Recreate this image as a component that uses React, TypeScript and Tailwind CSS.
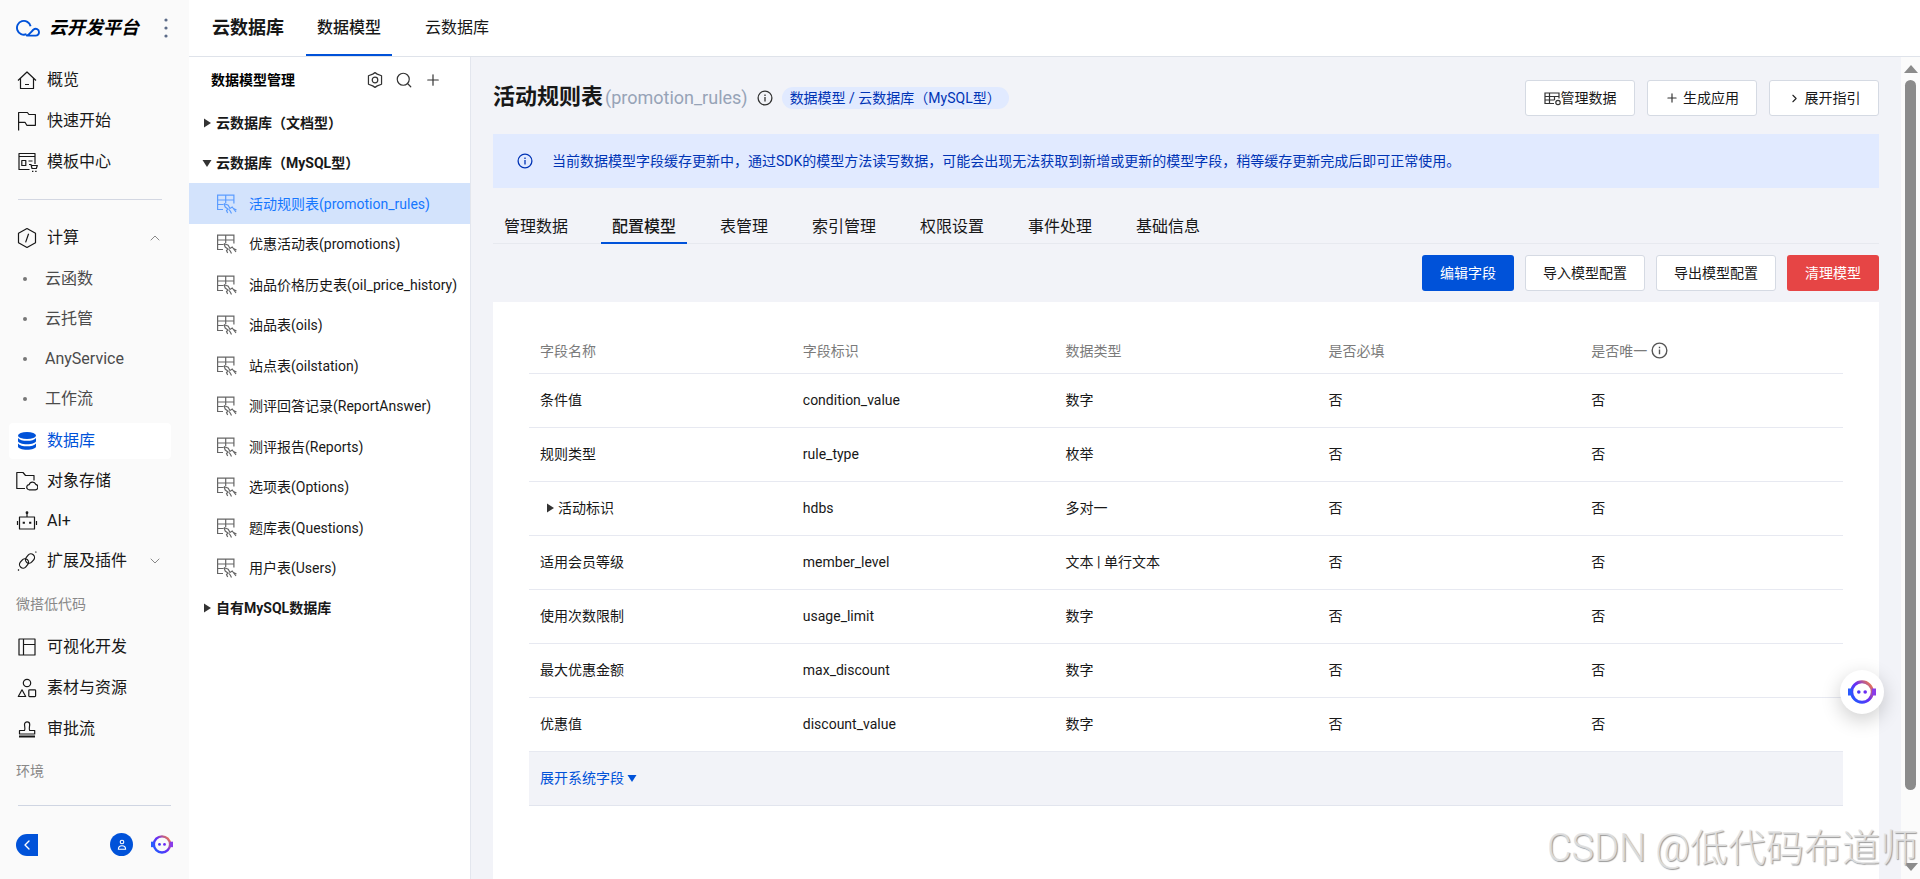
import React, { useState } from "react";
import { ChevronDown, ChevronLeft, ChevronRight, ChevronUp, Plus, Search } from "lucide-react";

interface IconProps {
  className?: string;
}

interface NavItem {
  label: string;
  icon: (props: IconProps) => React.ReactElement;
  children?: string[];
  collapsed?: boolean;
}

interface Field {
  name: string;
  key: string;
  type: string;
  expandable?: boolean;
}

const quickNav: NavItem[] = [
  { label: "概览", icon: HomeIcon },
  { label: "快速开始", icon: FlagIcon },
  { label: "模板中心", icon: TemplateIcon },
];

const mainNav: NavItem[] = [
  {
    label: "计算",
    icon: ComputeIcon,
    children: ["云函数", "云托管", "AnyService", "工作流"],
  },
  { label: "数据库", icon: DatabaseIcon },
  { label: "对象存储", icon: StorageIcon },
  { label: "AI+", icon: RobotIcon },
  { label: "扩展及插件", icon: PluginIcon, collapsed: true },
];

const lowCodeNav: NavItem[] = [
  { label: "可视化开发", icon: LayoutIcon },
  { label: "素材与资源", icon: ShapesIcon },
  { label: "审批流", icon: StampIcon },
];

const models = [
  "活动规则表(promotion_rules)",
  "优惠活动表(promotions)",
  "油品价格历史表(oil_price_history)",
  "油品表(oils)",
  "站点表(oilstation)",
  "测评回答记录(ReportAnswer)",
  "测评报告(Reports)",
  "选项表(Options)",
  "题库表(Questions)",
  "用户表(Users)",
];

const tabs = ["管理数据", "配置模型", "表管理", "索引管理", "权限设置", "事件处理", "基础信息"];

const fields: Field[] = [
  { name: "条件值", key: "condition_value", type: "数字" },
  { name: "规则类型", key: "rule_type", type: "枚举" },
  { name: "活动标识", key: "hdbs", type: "多对一", expandable: true },
  { name: "适用会员等级", key: "member_level", type: "文本 | 单行文本" },
  { name: "使用次数限制", key: "usage_limit", type: "数字" },
  { name: "最大优惠金额", key: "max_discount", type: "数字" },
  { name: "优惠值", key: "discount_value", type: "数字" },
];

export default function App() {
  return (
    <div className="relative flex h-screen overflow-hidden bg-white font-['Roboto','Noto_Sans_CJK_SC',sans-serif] text-sm text-[#181818]">
      <Sidebar />
      <div className="flex min-w-0 flex-1 flex-col">
        <TopBar />
        <div className="flex min-h-0 flex-1">
          <ModelTree />
          <Content />
          <Scrollbar />
        </div>
      </div>
      <button
        aria-label="智能助手"
        className="absolute right-9 bottom-[165px] flex size-11 items-center justify-center rounded-full bg-white shadow-[0_6px_20px_rgba(0,0,0,0.2)]"
      >
        <AssistantIcon className="w-7" />
      </button>
      <p className="pointer-events-none absolute right-0.5 bottom-[3px] text-[38px] leading-[56px] font-light whitespace-nowrap text-[#e2e2e2]/90 [text-shadow:1px_1px_1px_#9a9a9a]">
        CSDN @低代码布道师
      </p>
    </div>
  );
}

function Sidebar() {
  return (
    <aside className="flex w-[189px] shrink-0 flex-col bg-[#fafafa]">
      <div className="flex h-14 items-center pl-4">
        <LogoIcon className="w-6" />
        <span className="ml-[9px] text-lg font-bold text-black italic">云开发平台</span>
        <button aria-label="更多" className="ml-[25px] text-[#5b6b88]">
          <svg viewBox="0 0 4 20" className="h-5 w-1" fill="currentColor">
            <circle cx="2" cy="2" r="1.6" />
            <circle cx="2" cy="10" r="1.6" />
            <circle cx="2" cy="18" r="1.6" />
          </svg>
        </button>
      </div>
      <nav className="pt-1.5">
        <NavList items={quickNav} className="gap-[5px]" />
        <hr className="mt-[19px] mr-[27px] mb-5 ml-[18px] border-[#d3d7e2]" />
        <NavList items={mainNav} className="gap-1" />
        <h2 className="flex h-[50px] items-center pl-4 text-[#888]">微搭低代码</h2>
        <NavList items={lowCodeNav} className="gap-[5px]" />
        <h2 className="flex h-12 items-center pl-4 text-[#888]">环境</h2>
      </nav>
      <hr className="mt-[10px] mr-[18px] ml-[18px] border-[#cfd5e2]" />
      <div className="mt-[27px] flex items-center pl-4">
        <button
          aria-label="收起"
          className="flex size-[22px] items-center justify-center rounded-l-full bg-[#0052d9] text-white"
        >
          <ChevronLeft size={16} />
        </button>
        <button
          aria-label="账号"
          className="ml-[72px] flex size-[23px] items-center justify-center rounded-full bg-[#0052d9] text-white"
        >
          <svg viewBox="0 0 12 12" className="size-3" fill="none" stroke="currentColor" strokeWidth="1.1">
            <circle cx="6" cy="3" r="1.8" />
            <path d="M2.4 10.3c0-3 1.6-3.6 3.6-3.6s3.600.6 3.600 3.600z" />
          </svg>
        </button>
        <button aria-label="智能助手" className="ml-[18px]">
          <AssistantIcon className="w-[22px]" />
        </button>
      </div>
    </aside>
  );
}

function NavList({ items, className }: { items: NavItem[]; className: string }) {
  return (
    <ul className={`flex flex-col ${className}`}>
      {items.map((item) => (
        <NavRow key={item.label} item={item} />
      ))}
    </ul>
  );
}

function NavRow({ item }: { item: NavItem }) {
  const [open, setOpen] = useState(!item.collapsed);
  const active = item.label === "数据库";
  const foldable = item.children || item.collapsed;
  const Icon = item.icon;

  return (
    <li>
      <div
        className={`mr-[18px] ml-[9px] flex h-9 items-center rounded-sm pl-[7px] ${
          active ? "bg-white text-[#0052d9]" : ""
        }`}
      >
        <a href="#" className="flex items-center gap-[9px] text-base">
          <Icon className="size-[22px]" />
          {item.label}
        </a>
        {foldable && (
          <button
            aria-label={open ? "收起" : "展开"}
            onClick={() => setOpen(!open)}
            className="mr-2 ml-auto text-[#888]"
          >
            {open ? <ChevronUp size={16} strokeWidth={1.5} /> : <ChevronDown size={16} strokeWidth={1.5} />}
          </button>
        )}
      </div>
      {item.children && open && (
        <ul className="mt-[5px] mb-0.5 flex flex-col gap-1">
          {item.children.map((child) => (
            <li key={child} className="flex h-9 items-center pl-[23px] text-base text-[#4b4b4b]">
              <span className="mr-[18px] size-1 rounded-full bg-[#777]" />
              <a href="#">{child}</a>
            </li>
          ))}
        </ul>
      )}
    </li>
  );
}

function TopBar() {
  return (
    <header className="flex h-[57px] shrink-0 items-stretch gap-[22px] border-b border-[#dfe3ea] pl-[23px]">
      <h1 className="flex items-center text-lg font-bold">云数据库</h1>
      <nav className="flex gap-[22px] text-base">
        <a href="#" className="flex items-center border-b-2 border-[#0052d9] px-[11px] pt-0.5 font-medium">
          数据模型
        </a>
        <a href="#" className="flex items-center border-b-2 border-transparent px-[11px] pt-0.5">
          云数据库
        </a>
      </nav>
    </header>
  );
}

function ModelTree() {
  return (
    <section className="w-[282px] shrink-0 border-r border-[#e3e6ee]">
      <div className="flex h-[46px] items-center pl-[22px] text-[#333]">
        <h2 className="mr-auto font-bold text-black">数据模型管理</h2>
        <button aria-label="设置">
          <SettingIcon className="size-[18px]" />
        </button>
        <button aria-label="搜索" className="ml-[11px]">
          <Search size={18} strokeWidth={1.6} />
        </button>
        <button aria-label="新建" className="mr-7 ml-[11px]">
          <Plus size={18} strokeWidth={1.6} />
        </button>
      </div>
      <TreeGroup label="云数据库（文档型）" />
      <TreeGroup label="云数据库（MySQL型）" open />
      <ul>
        {models.map((model, i) => (
          <li key={model} className="odd:h-[41px] even:h-10">
            <a
              href="#"
              className={`flex h-full items-center pl-7 ${i === 0 ? "bg-[#d3e3fc] text-[#1677ff]" : ""}`}
            >
              <ModelIcon className={`mr-3 size-5 ${i === 0 ? "text-[#5c9dff]" : "text-[#666]"}`} />
              {model}
            </a>
          </li>
        ))}
      </ul>
      <TreeGroup label="自有MySQL数据库" />
    </section>
  );
}

function TreeGroup({ label, open }: { label: string; open?: boolean }) {
  return (
    <button className="flex h-10 w-full items-center gap-1 pl-[13px] font-bold">
      <CaretIcon className={`size-[10px] text-[#333] ${open ? "rotate-90" : ""}`} />
      {label}
    </button>
  );
}

function Content() {
  const [tab, setTab] = useState("配置模型");

  return (
    <main className="flex min-w-0 flex-1 flex-col bg-[#f2f3f8] px-[22px] pt-[23px]">
      <div className="flex h-9 items-center">
        <h2 className="pb-0.5 text-[22px] font-bold">活动规则表</h2>
        <span className="ml-0.5 text-lg text-[#97a3b7]">(promotion_rules)</span>
        <InfoIcon className="ml-[9px] size-4 text-[#333]" />
        <span className="ml-[9px] flex h-[22px] items-center rounded-full bg-[#e1eaff] px-2 text-[#0034b5]">
          数据模型 / 云数据库（MySQL型）
        </span>
        <div className="ml-auto flex gap-3">
          <Button className="w-[110px] border border-[#d5dae3] bg-white">
            <DataIcon className="size-[17px]" />
            管理数据
          </Button>
          <Button className="w-[110px] gap-1 border border-[#d5dae3] bg-white">
            <Plus size={14} strokeWidth={2} className="text-[#333]" />
            生成应用
          </Button>
          <Button className="w-[110px] gap-1 border border-[#d5dae3] bg-white">
            <ChevronRight size={13} className="text-[#222]" />
            展开指引
          </Button>
        </div>
      </div>

      <div className="mt-[18px] flex h-[54px] shrink-0 items-center bg-[#e1eaff] pl-6 text-[#0034b5]">
        <InfoIcon className="mr-[19px] size-4" />
        当前数据模型字段缓存更新中，通过SDK的模型方法读写数据，可能会出现无法获取到新增或更新的模型字段，稍等缓存更新完成后即可正常使用。
      </div>

      <div role="tablist" className="mt-5 flex h-9 shrink-0 gap-[22px] border-b border-[#e7e9ef] text-base">
        {tabs.map((name) => (
          <button
            key={name}
            role="tab"
            aria-selected={name === tab}
            onClick={() => setTab(name)}
            className={`-mb-px border-b-2 px-[11px] pt-1 ${
              name === tab ? "border-[#0052d9] font-medium" : "border-transparent"
            }`}
          >
            {name}
          </button>
        ))}
      </div>

      <div className="mt-[11px] flex justify-end gap-[11px]">
        <Button className="bg-[#0052d9] px-[18px] text-white">编辑字段</Button>
        <Button className="border border-[#d5dae3] bg-white px-[17px]">导入模型配置</Button>
        <Button className="border border-[#d5dae3] bg-white px-[17px]">导出模型配置</Button>
        <Button className="bg-[#e64545] px-[18px] text-white">清理模型</Button>
      </div>

      <div className="mt-[11px] flex-1 bg-white px-9 pt-[27px]">
        <FieldTable />
      </div>
    </main>
  );
}

function Button({ className, children }: { className: string; children: React.ReactNode }) {
  return (
    <button className={`flex h-9 items-center justify-center rounded-[3px] whitespace-nowrap ${className}`}>
      {children}
    </button>
  );
}

function FieldTable() {
  return (
    <table className="w-full table-fixed text-left">
      <thead>
        <tr className="h-11 border-b border-[#e7e9f1] text-[#7b7b7b]">
          <th className="px-[11px] font-normal">字段名称</th>
          <th className="px-[11px] font-normal">字段标识</th>
          <th className="px-[11px] font-normal">数据类型</th>
          <th className="px-[11px] font-normal">是否必填</th>
          <th className="px-[11px] font-normal">
            <span className="flex items-center gap-1">
              是否唯一
              <InfoIcon className="size-[17px] text-[#555]" />
            </span>
          </th>
        </tr>
      </thead>
      <tbody>
        {fields.map((field) => (
          <tr key={field.key} className="h-[54px] border-b border-[#e7e9f1]">
            <td className="px-[11px]">
              {field.expandable ? (
                <button className="flex items-center gap-[3px] pl-[5px]">
                  <CaretIcon className="size-[10px] text-[#333]" />
                  {field.name}
                </button>
              ) : (
                field.name
              )}
            </td>
            <td className="px-[11px]">{field.key}</td>
            <td className="px-[11px]">{field.type}</td>
            <td className="px-[11px]">否</td>
            <td className="px-[11px]">否</td>
          </tr>
        ))}
        <tr className="h-[54px] border-b border-[#e2e5ee] bg-[#f2f3f8]">
          <td colSpan={5} className="px-[11px]">
            <button className="flex items-center gap-[3px] text-[#0052d9]">
              展开系统字段
              <CaretIcon className="size-[10px] rotate-90" />
            </button>
          </td>
        </tr>
      </tbody>
    </table>
  );
}

function Scrollbar() {
  return (
    <div className="flex w-[19px] shrink-0 flex-col items-center bg-[#fbfbfb] pt-2 pb-2 text-[#8b8b8b]">
      <svg viewBox="0 0 14 8" className="h-2 w-[14px]" fill="currentColor">
        <path d="M7 0l7 8H0z" />
      </svg>
      <div className="mt-[7px] mb-[73px] w-[11px] flex-1 rounded-full bg-[#8b8b8b]" />
      <svg viewBox="0 0 14 8" className="h-2 w-[14px]" fill="currentColor">
        <path d="M7 8l7-8H0z" />
      </svg>
    </div>
  );
}

function LogoIcon({ className }: IconProps) {
  return (
    <svg viewBox="0 0 24 18" className={className} fill="none" stroke="#0052d9" strokeWidth="1.9">
      <path d="M10.500 15.200A6.900 6.900 0 1 1 14.600 7.200" />
      <path d="M10.800 16.600c2.600-1 4.600-4 6.500-5.800 2.600-2.200 5.700-.6 5.700 2.300 0 2.200-1.600 3.500-3.500 3.500z" strokeLinejoin="round" />
    </svg>
  );
}

function AssistantIcon({ className }: IconProps) {
  return (
    <svg viewBox="0 0 28 24" className={className} fill="none">
      <defs>
        <linearGradient id="assistant" x1="3" y1="20" x2="23" y2="3" gradientUnits="userSpaceOnUse">
          <stop stopColor="#1a5cff" />
          <stop offset="0.55" stopColor="#6a2cf5" />
          <stop offset="0.95" stopColor="#e2725b" />
        </linearGradient>
      </defs>
      <circle cx="14" cy="12" r="10.300" stroke="url(#assistant)" strokeWidth="3" />
      <path d="M0 8.5h4v7H0z" fill="#2a5bff" />
      <path d="M24 8.5h4v7h-4z" fill="#8a3be8" />
      <circle cx="10.8" cy="12" r="1.8" fill="#4a35f5" />
      <circle cx="17.2" cy="12" r="1.8" fill="#6a2cf5" />
    </svg>
  );
}

function CaretIcon({ className }: IconProps) {
  return (
    <svg viewBox="0 0 10 10" className={className} fill="currentColor">
      <path d="M2 0.5v9L9 5z" />
    </svg>
  );
}

function LineIcon({ className, children }: { className?: string; children: React.ReactNode }) {
  return (
    <svg
      viewBox="0 0 22 22"
      className={className}
      fill="none"
      stroke="currentColor"
      strokeWidth="1.2"
      strokeLinejoin="round"
    >
      {children}
    </svg>
  );
}

function HomeIcon({ className }: IconProps) {
  return (
    <LineIcon className={className}>
      <path d="M2 11.500L11 3l9 8.500M4.500 9.200v10.300h13V9.200M9 15.500h4" />
    </LineIcon>
  );
}

function FlagIcon({ className }: IconProps) {
  return (
    <LineIcon className={className}>
      <path d="M2.600 20.500V2.500h8.800l1.500 2h6.500v10.800h-8.600l-1.800-3H2.600" />
    </LineIcon>
  );
}

function TemplateIcon({ className }: IconProps) {
  return (
    <LineIcon className={className}>
      <path d="M13.5 18.500H3V2.500h16v10.500M3 5.500h16M5.800 9.500h4v5h-4zM12.500 10h4M13 13.500h2l1 4h4.300l1-3h-5.800" />
      <path d="M16 20.300h1.400M19.200 20.300h1.400" />
    </LineIcon>
  );
}

function ComputeIcon({ className }: IconProps) {
  return (
    <LineIcon className={className}>
      <path d="M11 1.500l8.500 4.800v9.400L11 20.500l-8.500-4.800V6.300zM12.600 6.800l-3 8.600" />
    </LineIcon>
  );
}

function DatabaseIcon({ className }: IconProps) {
  return (
    <svg viewBox="0 0 22 22" className={className} fill="currentColor">
      <ellipse cx="11" cy="5.500" rx="9" ry="3.600" />
      <path d="M2 8c1.500 2 5 2.800 9 2.800s7.500-.8 9-2.800v3c0 1.800-4 3.200-9 3.200s-9-1.400-9-3.200z" />
      <path d="M2 13.500c1.500 2 5 2.800 9 2.800s7.500-.8 9-2.800v3c0 1.800-4 3.300-9 3.300s-9-1.500-9-3.300z" />
    </svg>
  );
}

function StorageIcon({ className }: IconProps) {
  return (
    <LineIcon className={className}>
      <path d="M9 18.500H.8V2.500H7l2.500 3H18v5" />
      <path d="M13.500 19.800a2.600 2.600 0 0 1-.3-5.200 3.400 3.400 0 0 1 6.500-.3 2.800 2.800 0 0 1-.3 5.500z" />
    </LineIcon>
  );
}

function RobotIcon({ className }: IconProps) {
  return (
    <LineIcon className={className}>
      <path d="M3.500 7h15v12h-15zM11 3v4M1.500 11v4M20.500 11v4" />
      <circle cx="11" cy="2.700" r="0.800" fill="currentColor" />
      <path d="M7.800 11.800v2M14.200 11.800v2" strokeWidth="2.200" />
    </LineIcon>
  );
}

function PluginIcon({ className }: IconProps) {
  return (
    <LineIcon className={className}>
      <rect x="3" y="9.800" width="10" height="7.200" rx="3.600" transform="rotate(-50 8 13.400)" />
      <rect x="9" y="5" width="10" height="7.200" rx="3.600" transform="rotate(-50 14 8.600)" />
      <path d="M2 20.500l1-1M19.500 2.500l.8-.8" />
    </LineIcon>
  );
}

function LayoutIcon({ className }: IconProps) {
  return (
    <LineIcon className={className}>
      <path d="M3 3h16v16H3zM7.500 3v16M7.500 8.500H19" />
    </LineIcon>
  );
}

function ShapesIcon({ className }: IconProps) {
  return (
    <LineIcon className={className}>
      <circle cx="11" cy="6" r="3.700" />
      <path d="M6 12.800l3.700 6.700H2.300z" />
      <rect x="12.800" y="12.800" width="6.800" height="6.800" rx="0.800" />
    </LineIcon>
  );
}

function StampIcon({ className }: IconProps) {
  return (
    <LineIcon className={className}>
      <path d="M3.500 16v-3.500h5c1-2 0-4 0-6a2.600 2.600 0 0 1 5.200 0c0 2-1 4 0 6h5V16z" />
      <path d="M3 18.500h16" strokeWidth="2" />
    </LineIcon>
  );
}

function SettingIcon({ className }: IconProps) {
  return (
    <LineIcon className={className}>
      <path d="M11 2l2.800 1.800 5.200 2v10.400l-5.200 2L11 20l-2.800-1.800-5.200-2V5.800l5.200-2z" strokeWidth="1.500" />
      <circle cx="11" cy="11" r="3.400" strokeWidth="1.500" />
    </LineIcon>
  );
}

function ModelIcon({ className }: IconProps) {
  return (
    <svg viewBox="0 0 20 20" className={className} fill="none" stroke="currentColor" strokeWidth="1.200">
      <path d="M6 15.500H.6V1.100h16.300v8.400M.6 6h16.300M.6 10.500h6M8.700 1.100v8" />
      <path d="M7 9.500l4.200 1.700 1.800 3.300 2.200-1.500 3.800 5M7 9.500l1.200 3.500 2.800 2-1.500 1.500 1.200 2.500M12 15.500l1.200 1.500 1.300 2.500M16.500 14.500l3 1.500" />
    </svg>
  );
}

function DataIcon({ className }: IconProps) {
  return (
    <svg viewBox="0 0 17 16" className={className} fill="none" stroke="#333" strokeWidth="1.200">
      <path d="M10 13H1V2.500h14V8M1 6h14M1 9.500h9.500M5.500 2.500V13M5.500 13M10.500 6v3.500" />
      <circle cx="14" cy="12" r="2.200" />
    </svg>
  );
}

function InfoIcon({ className }: IconProps) {
  return (
    <svg viewBox="0 0 16 16" className={className} fill="none" stroke="currentColor" strokeWidth="1.300">
      <circle cx="8" cy="8" r="6.900" />
      <path d="M8 7v4.500M8 4.400v1.500" />
    </svg>
  );
}
